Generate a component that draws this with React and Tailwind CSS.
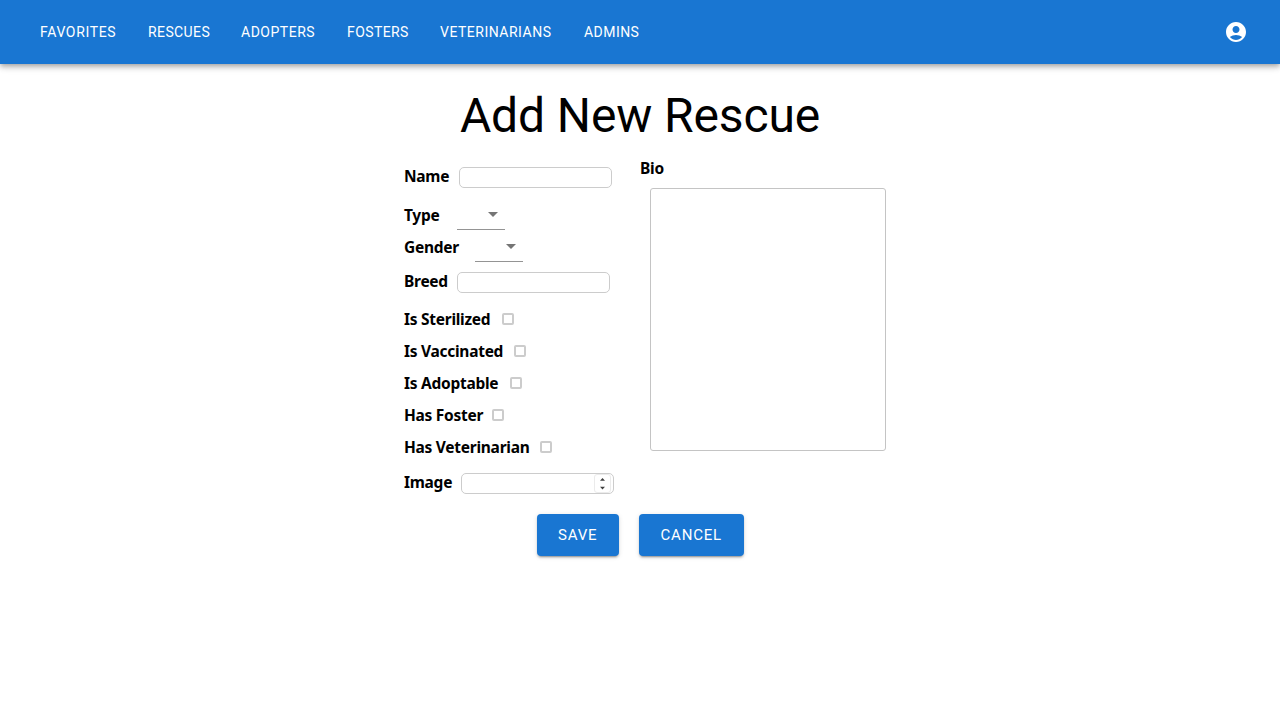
const navItems = [
  { label: "FAVORITES", width: "w-[108px] tracking-[0.64px]" },
  { label: "RESCUES", width: "w-[93px] tracking-[0.4px]" },
  { label: "ADOPTERS", width: "w-[106px] tracking-[0.52px]" },
  { label: "FOSTERS", width: "w-[93px] tracking-[0.4px]" },
  { label: "VETERINARIANS", width: "w-[144px] tracking-[0.5px]" },
  { label: "ADMINS", width: "w-[80px] tracking-[0.45px]" },
];

const checks = [
  { label: "Is Sterilized", width: "w-[98px]" },
  { label: "Is Vaccinated", width: "w-[110px]" },
  { label: "Is Adoptable", width: "w-[106px]" },
  { label: "Has Foster", width: "w-[88px]" },
  { label: "Has Veterinarian", width: "w-[136px]" },
];

function Label({ children, width }) {
  return <label className={`shrink-0 whitespace-nowrap ${width}`}>{children}</label>;
}

function TextBox({ children }) {
  return (
    <div className="flex h-[21px] w-[153px] justify-end rounded-[5px] border border-[#ccc] bg-white">
      {children}
    </div>
  );
}

function Select() {
  return (
    <div className="flex h-8 w-12 justify-end border-b border-[#949494]">
      <svg className="mt-1 h-6 w-6" viewBox="0 0 24 24" fill="#757575">
        <path d="M7 10l5 5 5-5z" />
      </svg>
    </div>
  );
}

function Spinner() {
  return (
    <div className="mr-[2px] flex h-[19px] w-[17px] items-center justify-center rounded-[3px] border border-[#ebebeb]">
      <svg width="7" height="13" viewBox="0 0 7 13" fill="#404040">
        <path d="M1 3.8 3.5 1 6 3.8zM1 9.7 3.5 12.5 6 9.7z" />
      </svg>
    </div>
  );
}

function Button({ children, width }) {
  return (
    <button
      className={`h-[42px] rounded-[4px] bg-[#1976d2] font-[Roboto,sans-serif] text-[15px] font-[370] tracking-[0.8px] text-white shadow-[0_3px_1px_-2px_rgba(0,0,0,0.2),0_2px_2px_0_rgba(0,0,0,0.14),0_1px_5px_0_rgba(0,0,0,0.12)] ${width}`}
    >
      {children}
    </button>
  );
}

export default function App() {
  return (
    <div className="h-[720px] overflow-hidden bg-white font-['Noto_Sans',sans-serif] text-black">
      <header className="flex h-16 items-center justify-between bg-[#1976d2] pr-8 pl-10 shadow-[0_2px_4px_-1px_rgba(0,0,0,0.2),0_4px_5px_0_rgba(0,0,0,0.14),0_1px_10px_0_rgba(0,0,0,0.12)]">
        <nav className="flex font-[Roboto,sans-serif] text-[14px] leading-6 font-[370] text-white">
          {navItems.map((item) => (
            <a key={item.label} className={item.width}>
              {item.label}
            </a>
          ))}
        </nav>
        <svg className="h-6 w-6" viewBox="0 0 24 24" fill="white">
          <path d="M12 2C6.48 2 2 6.48 2 12s4.48 10 10 10 10-4.48 10-10S17.52 2 12 2zm0 4c1.93 0 3.5 1.57 3.5 3.5S13.93 13 12 13s-3.5-1.57-3.5-3.5S10.07 6 12 6zm0 14c-2.03 0-4.43-.82-6.14-2.88C7.55 15.8 9.68 15 12 15s4.45.8 6.14 2.12C16.43 19.18 14.03 20 12 20z" />
        </svg>
      </header>
      <main>
        <h1 className="pt-6 text-center font-[Roboto,sans-serif] text-[48px] leading-[56px] tracking-[-0.12px]">
          Add New Rescue
        </h1>
        <div className="flex pt-3 pl-[404px] text-[15.5px] leading-6 font-bold tracking-[-0.27px]">
          <div className="w-[236px] pt-px">
            <div className="flex h-[41px] items-center">
              <Label width="w-[55px] pb-[3px]">Name</Label>
              <TextBox />
            </div>
            <div className="flex h-8 items-center">
              <Label width="w-[52.6px] pt-[2px]">Type</Label>
              <Select />
            </div>
            <div className="flex h-8 items-center">
              <Label width="w-[70.6px] pt-[2px]">Gender</Label>
              <Select />
            </div>
            <div className="flex h-[41px] items-center">
              <Label width="w-[53px] pb-[3px]">Breed</Label>
              <TextBox />
            </div>
            {checks.map((item) => (
              <div key={item.label} className="flex h-8 items-center">
                <Label width={item.width}>{item.label}</Label>
                <span className="h-3 w-3 rounded-[2px] border-2 border-[#ccc]" />
              </div>
            ))}
            <div className="flex h-[41px] items-center">
              <Label width="w-[57px] pb-[4px]">Image</Label>
              <TextBox>
                <Spinner />
              </TextBox>
            </div>
          </div>
          <div>
            <div>Bio</div>
            <textarea className="mt-2 ml-[10px] block h-[263px] w-[236px] resize-none rounded-[3px] border border-[#c4c4c4]" />
          </div>
        </div>
        <div className="flex justify-center gap-5 pt-[10px]">
          <Button width="w-[82.5px]">SAVE</Button>
          <Button width="w-[104.5px]">CANCEL</Button>
        </div>
      </main>
    </div>
  );
}
